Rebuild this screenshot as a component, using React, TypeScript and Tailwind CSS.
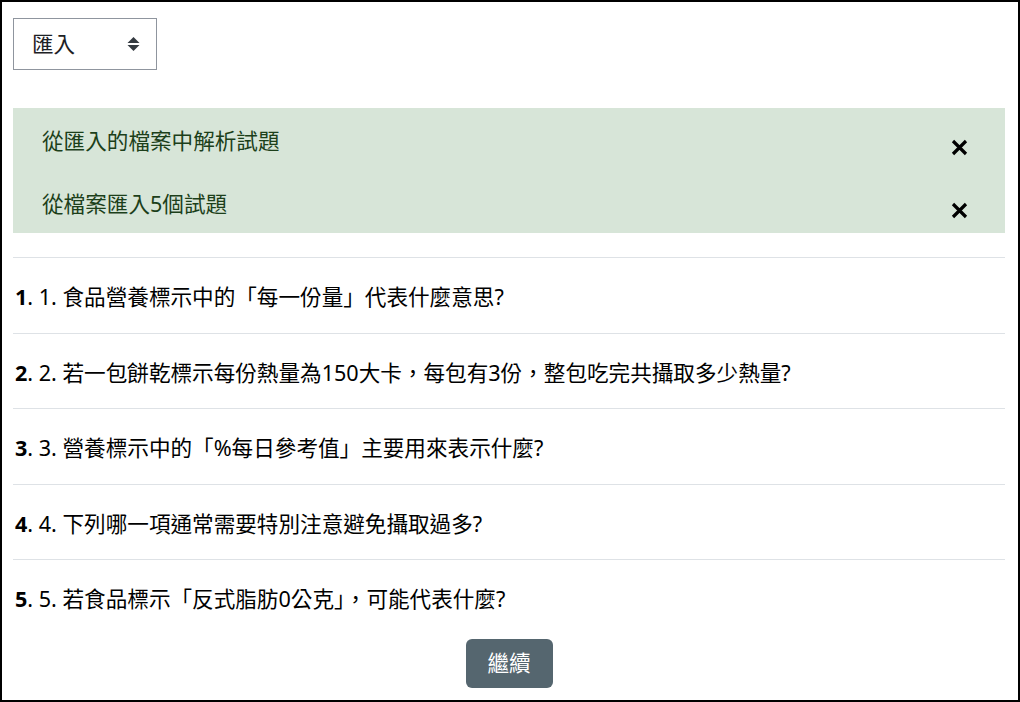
import React from "react";

const questions = [
  "1. 食品營養標示中的「每一份量」代表什麼意思?",
  "2. 若一包餅乾標示每份熱量為150大卡，每包有3份，整包吃完共攝取多少熱量?",
  "3. 營養標示中的「%每日參考值」主要用來表示什麼?",
  "4. 下列哪一項通常需要特別注意避免攝取過多?",
  "5. 若食品標示「反式脂肪0公克」，可能代表什麼?",
];

function CloseX() {
  return (
    <svg width="17" height="17" viewBox="0 0 17 17" className="shrink-0">
      <path d="M2 2 L15 15 M15 2 L2 15" stroke="#000" strokeWidth="3.2" strokeLinecap="butt" />
    </svg>
  );
}

export default function App() {
  const font = { fontFamily: '"Noto Sans", "Noto Sans CJK TC", sans-serif' };
  return (
    <div
      className="w-[1020px] h-[702px] border-2 border-black bg-white overflow-hidden text-[21.6px] leading-[32px] text-[#1d2125]"
      style={font}
    >
      <div className="ml-[11px] w-[992px] pt-[16px]">
        <div className="w-[144px] h-[52px] border border-[#8f959e] flex items-center justify-between pl-[18px] pr-[16px]">
          <span className="text-[#1d2125]">匯入</span>
          <svg width="13" height="16" viewBox="0 0 13 16">
            <path d="M6.5 1 L12.5 7 L0.5 7 Z" fill="#343a40" />
            <path d="M6.5 15 L12.5 9 L0.5 9 Z" fill="#343a40" />
          </svg>
        </div>

        <div className="mt-[38px] bg-[#d7e5d8] text-[#1c3f1a] h-[125px] pt-[17px] pl-[29px] pr-[37px] flex flex-col gap-[31px]">
          <div className="flex justify-between items-start h-[32px]">
            <span>從匯入的檔案中解析試題</span>
            <span className="mt-[14px]"><CloseX /></span>
          </div>
          <div className="flex justify-between items-start h-[32px]">
            <span>從檔案匯入5個試題</span>
            <span className="mt-[14px]"><CloseX /></span>
          </div>
        </div>

        <div className="mt-[24px]">
          {questions.map((q, i) => (
            <div key={i} className="border-t border-[#dee2e6] pt-[23px] pb-[19.5px] pl-[2px] text-black">
              <span className="font-bold">{i + 1}</span>. {q}
            </div>
          ))}
        </div>

        <div className="flex justify-center mt-[4px]">
          <button className="w-[87px] h-[49px] rounded-[6px] bg-[#55666f] text-white text-[21.6px]" style={font}>
            繼續
          </button>
        </div>
      </div>
    </div>
  );
}
